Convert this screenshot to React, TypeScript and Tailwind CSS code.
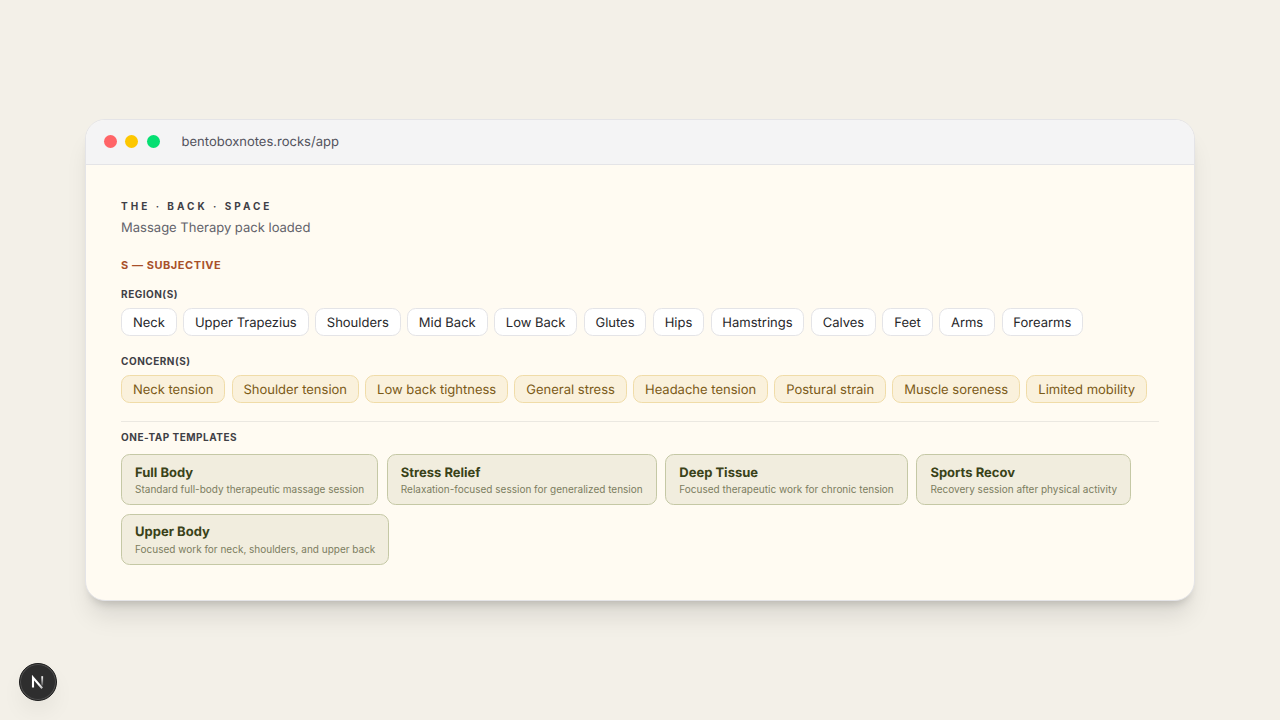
const regions = ['Neck', 'Upper Trapezius', 'Shoulders', 'Mid Back', 'Low Back', 'Glutes', 'Hips', 'Hamstrings', 'Calves', 'Feet', 'Arms', 'Forearms'];

const concerns = ['Neck tension', 'Shoulder tension', 'Low back tightness', 'General stress', 'Headache tension', 'Postural strain', 'Muscle soreness', 'Limited mobility'];

const templates = [
  { name: 'Full Body', description: 'Standard full-body therapeutic massage session' },
  { name: 'Stress Relief', description: 'Relaxation-focused session for generalized tension' },
  { name: 'Deep Tissue', description: 'Focused therapeutic work for chronic tension' },
  { name: 'Sports Recov', description: 'Recovery session after physical activity' },
  { name: 'Upper Body', description: 'Focused work for neck, shoulders, and upper back' },
];

function Label({ children }: { children: string }) {
  return <div className="text-[10px] leading-[14px] font-bold tracking-[0.5px] text-[#3f3f46]">{children}</div>;
}

function DevBadge() {
  return (
    <div className="fixed bottom-[19px] left-[19px] flex size-[38px] items-center justify-center rounded-full border border-[#1c1c1c] bg-[#2e2e2e] shadow-[inset_0_0_0_1px_#505050,0_12px_24px_-4px_rgba(0,0,0,0.08)]">
      <svg width="14" height="14" viewBox="0 0 14 14" fill="none">
        <defs>
          <linearGradient id="stem" x1="11" y1="1" x2="11" y2="11" gradientUnits="userSpaceOnUse">
            <stop stopColor="#fff" />
            <stop offset="1" stopColor="#fff" stopOpacity="0.15" />
          </linearGradient>
          <linearGradient id="diag" x1="8" y1="9" x2="12" y2="14" gradientUnits="userSpaceOnUse">
            <stop stopColor="#fff" />
            <stop offset="1" stopColor="#fff" stopOpacity="0.6" />
          </linearGradient>
        </defs>
        <path d="M2 12.5V2.6L11.2 13.2" stroke="url(#diag)" strokeWidth="2.1" />
        <path d="M11.2 1.2V10.5" stroke="url(#stem)" strokeWidth="1.8" />
      </svg>
    </div>
  );
}

export default function App() {
  return (
    <div className="flex h-screen items-center justify-center bg-[#f3f0e8] font-['Inter',sans-serif] [--spacing:4.33px]">
      <div className="h-[482px] w-[1110px] overflow-hidden rounded-[20px] border border-[#e4e4e7] bg-[#fffbf2] shadow-[0_20px_25px_-5px_rgba(0,0,0,0.10),0_8px_10px_-6px_rgba(0,0,0,0.18)]">
        <div className="flex h-[45px] items-center gap-[8.4px] border-b border-[#e4e4e7] bg-[#f4f4f5] pr-4 pl-[18px]">
          <span className="mb-px size-[13px] rounded-full bg-[#ff6467]" />
          <span className="mb-px size-[13px] rounded-full bg-[#fdc700]" />
          <span className="mb-px size-[13px] rounded-full bg-[#05df72]" />
          <span className="ml-[13.4px] text-[13px] leading-[18px] text-[#52525c] [text-rendering:geometricPrecision]">bentoboxnotes.rocks/app</span>
        </div>
        <div className="pt-[33px] pr-[35px] pl-[35.08px]">
          <div className="text-[10px] leading-[17px] font-bold tracking-[3px] text-[#3f3f46]">THE · BACK · SPACE</div>
          <div className="mt-[5px] text-[13px] leading-[17px] text-[#62626a] [text-rendering:geometricPrecision]">Massage Therapy pack loaded</div>
          <div className="mt-[20.66px] text-[11px] leading-[14px] font-bold tracking-[0.55px] text-[#a8502a]">S — SUBJECTIVE</div>
          <div className="mt-[15px]">
            <Label>REGION(S)</Label>
            <div className="mt-[7px] flex flex-wrap gap-[6.46px]">
              {regions.map((r) => (
                <span key={r} className="h-[28px] rounded-[8.7px] border border-[#e4e4e7] bg-white px-2.5 pt-[6px] text-[13px] leading-[17px] text-[#27272a] [text-rendering:geometricPrecision]">{r}</span>
              ))}
            </div>
          </div>
          <div className="mt-[18px]">
            <Label>CONCERN(S)</Label>
            <div className="mt-[7px] flex flex-wrap gap-[6.45px]">
              {concerns.map((c) => (
                <span key={c} className="h-[28px] rounded-[8.7px] border border-[#f0dca8] bg-[#faf1dc] px-2.5 pt-[6px] text-[13px] leading-[17px] text-[#7a5a17] [text-rendering:geometricPrecision]">{c}</span>
              ))}
            </div>
          </div>
          <div className="mt-[18px] border-t border-[#ebe8e1] pt-2">
            <Label>ONE-TAP TEMPLATES</Label>
            <div className="mt-[10.1px] flex flex-wrap gap-x-2 gap-y-[8.47px]">
              {templates.map((t) => (
                <div key={t.name} className="h-[51px] rounded-[8.7px] border border-[#c5c8a5] bg-[#f1edde] px-3 pt-[9.5px]">
                  <div className="text-[13px] leading-[17px] font-bold text-[#3a4218] [text-rendering:geometricPrecision]">{t.name}</div>
                  <div className="mt-[0.5px] text-[10px] leading-[14px] text-[#7c7d60]">{t.description}</div>
                </div>
              ))}
            </div>
          </div>
        </div>
      </div>
      <DevBadge />
    </div>
  );
}
